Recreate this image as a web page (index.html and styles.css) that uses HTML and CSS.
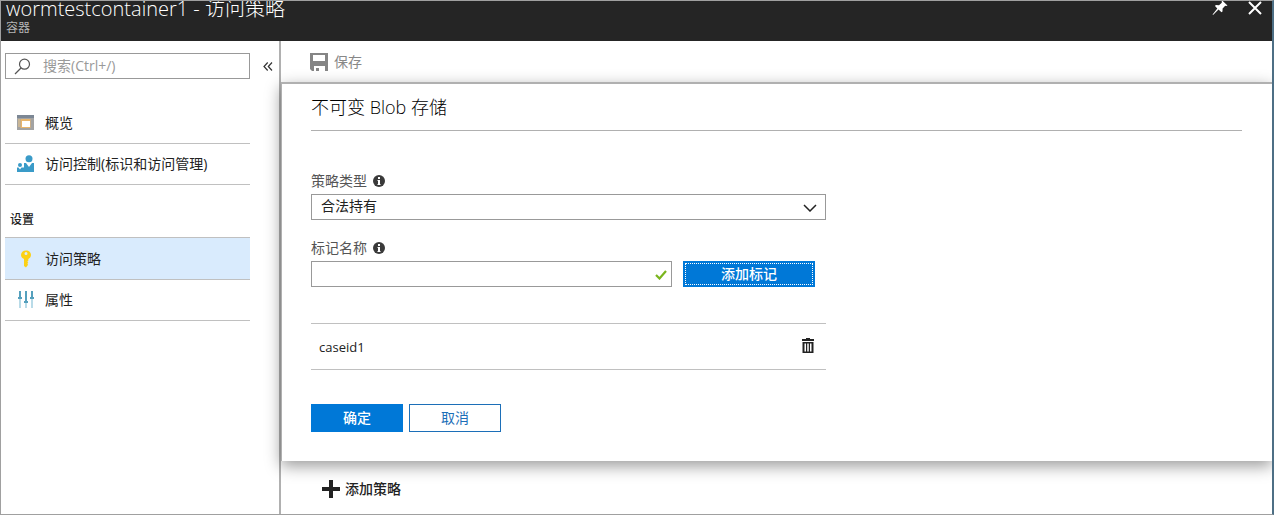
FILE: index.html
```html
<!DOCTYPE html>
<html lang="zh-CN">
<head>
<meta charset="utf-8">
<title>wormtestcontainer1 - 访问策略</title>
<link rel="stylesheet" href="styles.css">
</head>
<body>
<div class="blade">
  <header class="blade-header">
    <div class="blade-heading">
      <h1 class="blade-title">wormtestcontainer1 - 访问策略</h1>
      <p class="blade-subtitle">容器</p>
    </div>
    <div class="blade-actions">
      <button class="icon-button" type="button" aria-label="固定">
        <svg width="16" height="16" viewBox="0 0 16 16"><path fill="#fff" d="M10.2 0.5 15.5 5.6 14.2 6 13.2 5.8 10.6 8.6 10.5 11.6 9.5 12.3 6.5 9.6 1 15 0.6 14.6 5.3 8.5 3 6 3.8 5.1 7 5.2 9.8 2.8 9.7 1.4Z"/></svg>
      </button>
      <button class="icon-button" type="button" aria-label="关闭">
        <svg width="14" height="14" viewBox="0 0 14 14"><path fill="none" stroke="#fff" stroke-width="2" d="M1 1 13 13M13 1 1 13"/></svg>
      </button>
    </div>
  </header>
  <div class="blade-body">
    <aside class="sidebar">
      <div class="search-row">
        <div class="search-box">
          <svg class="search-icon" width="17" height="17" viewBox="0 0 17 17"><g fill="none" stroke="#555" stroke-width="1.2"><circle cx="10.5" cy="6.2" r="5"/><path d="M7 10 1 16"/></g></svg>
          <input class="search-input" type="text" placeholder="搜索(Ctrl+/)" aria-label="搜索">
        </div>
        <button class="collapse" type="button" aria-label="折叠">
          <svg width="10" height="9" viewBox="0 0 10 9"><path fill="none" stroke="#333" stroke-width="1.2" d="M4.7 0.5 1 4.5 4.7 8.5M9 0.5 5.3 4.5 9 8.5"/></svg>
        </button>
      </div>
      <nav class="menu">
        <a class="menu-item" href="#overview">
          <svg width="18" height="18" viewBox="0 0 18 18"><path fill="#a3a3a3" d="M0 1h17v15H0z"/><path fill="#7c8794" d="M0 1h17v3H0z"/><path fill="#e8b56c" d="M3.500 5h10v9h-10z"/><path fill="#c9b696" d="M1 5h2v8H1z"/><path fill="#fff" d="M5 7h8v6H5z"/></svg>
          <span>概览</span>
        </a>
        <a class="menu-item" href="#iam">
          <svg width="18" height="18" viewBox="0 0 18 18"><g fill="#3a9bc8"><circle cx="12" cy="3.800" r="3.500"/><path d="M7 8h2l3 4 3-4h2v9H7z"/><circle cx="3" cy="10" r="2"/><path d="M0 12.500h1.500L3 14.500l1.500-2H7V17H0z"/></g></svg>
          <span>访问控制(标识和访问管理)</span>
        </a>
        <h2 class="menu-heading">设置</h2>
        <a class="menu-item menu-item-active" href="#policy" aria-current="page">
          <svg width="18" height="18" viewBox="0 0 18 18"><path fill="#fcd116" fill-rule="evenodd" d="M9 0.500C12 0.500 14 2.500 14 5c0 2-1.200 3.300-2.700 4v1.800l-1 1 1 1-1 1 .8 1L9 17.500 7 16V9C5.300 8.300 4 7 4 5 4 2.500 6 0.500 9 0.500ZM9 2a1.500 1.500 0 1 0 0 3 1.500 1.500 0 0 0 0-3Z"/></svg>
          <span>访问策略</span>
        </a>
        <a class="menu-item" href="#properties">
          <svg width="18" height="18" viewBox="0 0 18 18"><path fill="#b9dbe8" d="M2 8h2v9H2zM8 11h2v6H8zM14 8h2v9h-2z"/><path fill="#55a0bd" d="M2 0h2v6h1v2H1V6h1zM8 0h2v10h1v2H7v-2h1zM14 0h2v6h1v2h-4V6h1z"/></svg>
          <span>属性</span>
        </a>
      </nav>
    </aside>
    <main class="content">
      <div class="toolbar">
        <button class="save" type="button" disabled>
          <svg width="18" height="18" viewBox="0 0 18 18"><path fill="#858585" fill-rule="evenodd" d="M0 0h18v18h-3v-5H4v5H2l-2-2ZM3 2v6h12V2ZM6 15h3v3H6Z"/></svg>
          <span>保存</span>
        </button>
      </div>
      <form class="panel">
        <h2 class="panel-title">不可变 Blob 存储</h2>
        <div class="form">
          <div class="field">
            <div class="field-label">
              <label for="policy-type">策略类型</label>
              <svg width="12" height="12" viewBox="0 0 12 12"><circle cx="6" cy="6" r="6" fill="#3a3a3a"/><path fill="#fff" d="M5 2h2v2H5zM4.500 5H7v4h.5v1h-3V9H5V6h-.5z"/></svg>
            </div>
            <div class="control">
              <select class="input" id="policy-type"><option>合法持有</option></select>
              <svg class="chevron" width="14" height="8" viewBox="0 0 14 8"><path fill="none" stroke="#222" stroke-width="1.500" d="M1 1l6 6 6-6"/></svg>
            </div>
          </div>
          <div class="field">
            <div class="field-label">
              <label for="tag-name">标记名称</label>
              <svg width="12" height="12" viewBox="0 0 12 12"><circle cx="6" cy="6" r="6" fill="#3a3a3a"/><path fill="#fff" d="M5 2h2v2H5zM4.500 5H7v4h.5v1h-3V9H5V6h-.5z"/></svg>
            </div>
            <div class="tag-row">
              <div class="control">
                <input class="input" id="tag-name" type="text">
                <svg class="check" width="12" height="10" viewBox="0 0 12 10"><path fill="none" stroke="#7ab51d" stroke-width="2.200" d="M1 5l3.500 3.500L11 1"/></svg>
              </div>
              <button class="button button-primary button-add" type="button">添加标记</button>
            </div>
          </div>
          <ul class="tags">
            <li class="tag">
              <span>caseid1</span>
              <button class="icon-button" type="button" aria-label="删除">
                <svg width="12" height="18" viewBox="0 0 12 18"><path fill="#222" fill-rule="evenodd" d="M4 0h4v1h4v2H0V1h4ZM.5 4h11v11H.5ZM2.500 5.500v8H4v-8ZM5.250 5.500v8h1.500v-8ZM8 5.500v8h1.500v-8Z"/></svg>
              </button>
            </li>
          </ul>
          <div class="buttons">
            <button class="button button-primary" type="button">确定</button>
            <button class="button" type="button">取消</button>
          </div>
        </div>
      </form>
      <button class="add-policy" type="button">
        <svg width="18" height="18" viewBox="0 0 18 18"><path fill="#222" d="M7 0h4v7h7v4h-7v7H7v-7H0V7h7z"/></svg>
        <span>添加策略</span>
      </button>
    </main>
  </div>
</div>
</body>
</html>
```
FILE: styles.css
```css
* {
  box-sizing: border-box;
}

body {
  margin: 0;
  color: #222;
  background: #fff;
  font: 14px/20px "Open Sans", "Noto Sans CJK SC", sans-serif;
}

h1, h2, p, ul {
  margin: 0;
  padding: 0;
  font-weight: 400;
}

button, input, select {
  font: inherit;
  color: inherit;
}

button {
  padding: 0;
  border: 0;
  background: none;
}

svg {
  display: block;
  flex: none;
}

.blade {
  display: flex;
  flex-direction: column;
  min-height: 100vh;
  border: 1px solid #a0a0a0;
  border-right: 2px solid #4d6f85;
  overflow: hidden;
}

.blade-header {
  display: flex;
  justify-content: space-between;
  padding: 0 10px 2px 5px;
  color: #fff;
  background: #252525;
  overflow: hidden;
}

.blade-title {
  font-size: 20px;
  font-weight: 300;
  line-height: 16px;
}

.blade-subtitle {
  color: #b5b5b5;
  font-size: 12px;
  line-height: 22px;
}

.blade-actions {
  display: flex;
  align-items: center;
  gap: 20px;
  height: 13px;
}

.blade-body {
  display: flex;
  flex: 1;
}

.sidebar {
  flex: none;
  width: 278px;
  padding: 12px 6px 0 4px;
}

.search-row {
  display: flex;
  align-items: center;
  justify-content: space-between;
}

.search-box {
  display: flex;
  align-items: center;
  gap: 12px;
  width: 245px;
  height: 26px;
  padding-left: 8px;
  border: 1px solid #999;
}

.search-input {
  flex: 1;
  min-width: 0;
  padding: 0;
  border: 0;
  outline: 0;
  background: none;
}

.search-input::placeholder {
  color: #999;
}

.menu {
  width: 245px;
  margin-top: 24px;
}

.menu-item {
  display: flex;
  align-items: center;
  gap: 10px;
  height: 41px;
  padding-left: 12px;
  border-bottom: 1px solid #c0c0c0;
  color: #222;
  text-decoration: none;
}

.menu-heading {
  padding: 25px 5px 7px;
  font-size: 12px;
  font-weight: 500;
}

.menu-item-active {
  height: 43px;
  border-top: 1px solid #c0c0c0;
  background: #d9ebfd;
}

.content {
  flex: 1;
  min-width: 0;
  border-left: 2px solid #b0b0b0;
}

.toolbar {
  padding: 11px 29px 10px;
}

.save {
  display: flex;
  align-items: center;
  gap: 6px;
  color: #888;
}

.panel {
  position: relative;
  padding: 11px 30px 29px 29px;
  border-top: 2px solid #b0b0b0;
  border-left: 1px solid #b0b0b0;
  background: #fff;
  box-shadow: 0 5px 15px rgba(0, 0, 0, 0.4);
}

.panel-title {
  padding-bottom: 11px;
  border-bottom: 1px solid #b0b0b0;
  color: #000;
  font-size: 18px;
  font-weight: 300;
  line-height: 24px;
}

.form {
  max-width: 515px;
  padding-top: 40px;
}

.field {
  margin-bottom: 18px;
}

.field-label {
  display: flex;
  align-items: center;
  gap: 6px;
  height: 20px;
  margin-bottom: 3px;
  color: #555;
}

.control {
  position: relative;
  flex: 1;
}

.input {
  display: block;
  width: 100%;
  height: 26px;
  padding: 0 9px 2px;
  border: 1px solid #999;
  border-radius: 0;
  outline: 0;
  background: #fff;
  appearance: none;
}

.chevron {
  position: absolute;
  top: 10px;
  right: 9px;
}

.check {
  position: absolute;
  top: 9px;
  right: 5px;
}

.tag-row {
  display: flex;
  gap: 11px;
  padding-right: 11px;
}

.button {
  width: 92px;
  height: 28px;
  border: 1px solid #1c6fb8;
  color: #1c6fb8;
  background: #fff;
}

.button-primary {
  border-color: #0078d7;
  color: #fff;
  background: #0078d7;
  font-weight: 500;
}

.button-add {
  width: 132px;
  height: 26px;
  outline: 1px dotted #fff;
  outline-offset: -3px;
}

.tags {
  margin: 36px 0 34px;
  border-top: 1px solid #c0c0c0;
  list-style: none;
}

.tag {
  display: flex;
  align-items: center;
  justify-content: space-between;
  height: 46px;
  padding: 0 12px 0 8px;
  border-bottom: 1px solid #c0c0c0;
  font-size: 13px;
}

.buttons {
  display: flex;
  gap: 6px;
}

.add-policy {
  position: relative;
  display: flex;
  align-items: center;
  gap: 5px;
  margin: 18px 41px 0;
  font-weight: 500;
}
```
